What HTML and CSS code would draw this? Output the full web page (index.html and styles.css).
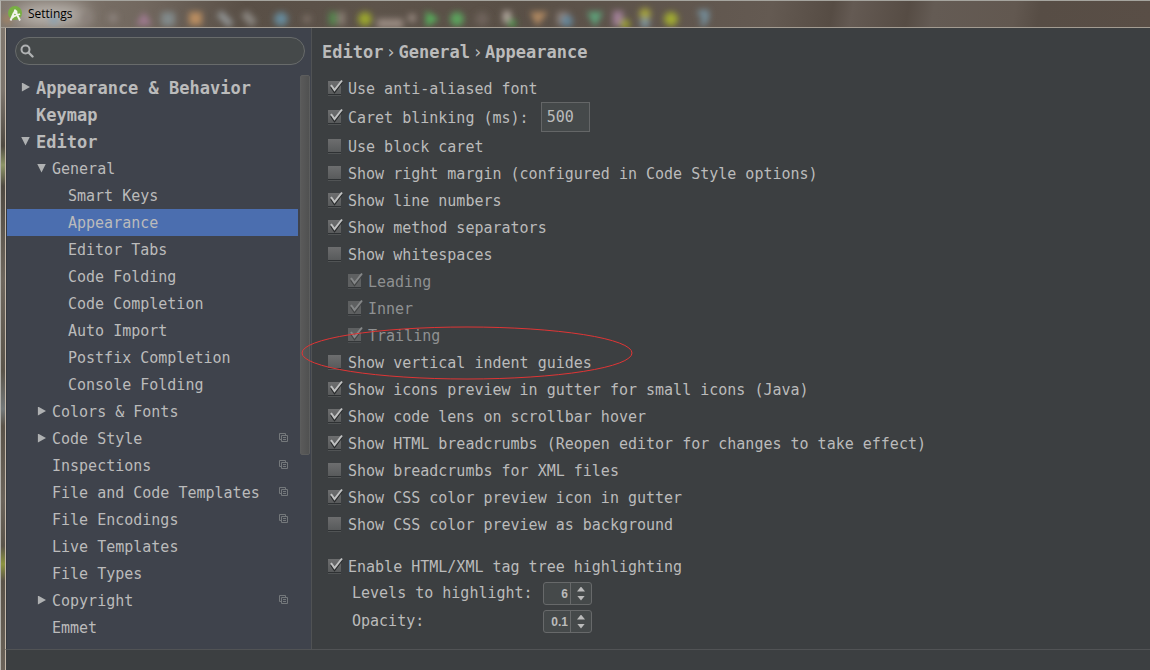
FILE: index.html
```html
<!DOCTYPE html>
<html lang="en">
<head>
<meta charset="utf-8">
<title>Settings</title>
<link rel="stylesheet" href="styles.css">
</head>
<body>
<div class="window">
  <header class="titlebar">
    <svg class="glass" width="720" height="26" viewBox="0 0 720 26" aria-hidden="true">
      <defs>
        <filter id="soft" x="-5%" y="-50%" width="110%" height="200%"><feGaussianBlur stdDeviation="3"/></filter>
        <filter id="glow" x="-50%" y="-100%" width="200%" height="300%"><feGaussianBlur stdDeviation="9"/></filter>
      </defs>
      <ellipse cx="50" cy="14" rx="38" ry="10" fill="#c8c3be" filter="url(#glow)"/>
      <g filter="url(#soft)">
        <circle cx="6" cy="18" r="4" fill="#a8845f"/>
        <circle cx="53" cy="19" r="5" fill="#8ba1b0"/>
        <circle cx="86" cy="17" r="5" fill="#8a807a"/>
        <circle cx="112" cy="17" r="5" fill="#8a807a"/>
        <path d="M135 24l8-13 8 13z" fill="#a07a92"/>
        <rect x="160" y="11" width="14" height="14" rx="3" fill="#81898a"/>
        <rect x="188" y="11" width="13" height="13" fill="#b98d60"/>
        <path d="M218 12l12 12" stroke="#929596" stroke-width="7"/>
        <path d="M243 12l10 11" stroke="#8b8782" stroke-width="8"/>
        <circle cx="280" cy="18" r="7" fill="#66899a"/>
        <circle cx="306" cy="18" r="4" fill="#7d7067"/>
        <rect x="328" y="11" width="8" height="13" fill="#558750"/>
        <rect x="337" y="11" width="7" height="13" fill="#897d73"/>
        <circle cx="364" cy="18" r="7" fill="#9aa52f"/>
        <rect x="376" y="18" width="26" height="9" fill="#9a8b82"/>
        <circle cx="411" cy="17" r="4" fill="#9a8b82"/>
        <path d="M425 10l13 8-13 8z" fill="#56b05b"/>
        <circle cx="456" cy="18" r="7" fill="#5ba35d"/>
        <circle cx="481" cy="18" r="7" fill="#6d625a"/>
        <rect x="502" y="10" width="8" height="12" fill="#b0a69d"/>
        <circle cx="511" cy="22" r="4" fill="#4f9b4f"/>
        <path d="M529 11h18l-11 14z" fill="#b28a62"/>
        <rect x="556" y="11" width="12" height="13" fill="#8c8079"/>
        <circle cx="566" cy="20" r="6" fill="#65869a"/>
        <path d="M586 11h16l-8 15z" fill="#5fa47c"/>
        <rect x="612" y="10" width="10" height="15" fill="#a17f98"/>
        <circle cx="624" cy="23" r="5" fill="#9ba02e"/>
        <circle cx="644" cy="13" r="6" fill="#a4a33e"/>
        <circle cx="644" cy="22" r="5" fill="#7f959e"/>
        <circle cx="670" cy="18" r="7" fill="#a0aa30"/>
        <path d="M697 12h8v5l-4 7" fill="none" stroke="#758f9c" stroke-width="6"/>
      </g>
    </svg>
    <svg class="app-icon" width="16" height="16" viewBox="0 0 16 16" aria-hidden="true">
      <circle cx="7" cy="7" r="7" fill="#78b043"/>
      <path d="M7 3.500v3M6 6.500L2.500 14.500M8 6.500l4 8M4 12c1.500-2.500 5-2.500 8-4" fill="none" stroke="#f2f5ee" stroke-width="1.900"/>
      <circle cx="7.500" cy="6" r="2" fill="#f2f5ee"/>
    </svg>
    <span class="title">Settings</span>
  </header>

  <div class="client">
    <aside class="sidebar">
      <div class="search">
        <svg width="14" height="14" viewBox="0 0 14 14" aria-hidden="true"><circle cx="5.500" cy="5.500" r="4" fill="none" stroke="#b0b2b3" stroke-width="2"/><path d="M8.500 8.500l4 4" stroke="#b0b2b3" stroke-width="2.400" stroke-linecap="round"/></svg>
        <input type="search" aria-label="Search settings">
      </div>
      <div class="tree-pane">
        <nav class="tree" aria-label="Settings sections">
          <button class="node top closed">Appearance &amp; Behavior</button>
          <button class="node top">Keymap</button>
          <button class="node top open">Editor</button>
          <button class="node group open">General</button>
          <button class="node leaf">Smart Keys</button>
          <button class="node leaf selected" aria-current="page">Appearance</button>
          <button class="node leaf">Editor Tabs</button>
          <button class="node leaf">Code Folding</button>
          <button class="node leaf">Code Completion</button>
          <button class="node leaf">Auto Import</button>
          <button class="node leaf">Postfix Completion</button>
          <button class="node leaf">Console Folding</button>
          <button class="node group closed">Colors &amp; Fonts</button>
          <button class="node group closed">Code Style<svg class="copy" width="10" height="10" viewBox="0 0 10 10"><path d="M2.500 6.500h-2v-6h6v2M2.500 2.500h6v6h-6zM4 4.500h3M4 6.500h3"/></svg></button>
          <button class="node group">Inspections<svg class="copy" width="10" height="10" viewBox="0 0 10 10"><path d="M2.500 6.500h-2v-6h6v2M2.500 2.500h6v6h-6zM4 4.500h3M4 6.500h3"/></svg></button>
          <button class="node group">File and Code Templates<svg class="copy" width="10" height="10" viewBox="0 0 10 10"><path d="M2.500 6.500h-2v-6h6v2M2.500 2.500h6v6h-6zM4 4.500h3M4 6.500h3"/></svg></button>
          <button class="node group">File Encodings<svg class="copy" width="10" height="10" viewBox="0 0 10 10"><path d="M2.500 6.500h-2v-6h6v2M2.500 2.500h6v6h-6zM4 4.500h3M4 6.500h3"/></svg></button>
          <button class="node group">Live Templates</button>
          <button class="node group">File Types</button>
          <button class="node group closed">Copyright<svg class="copy" width="10" height="10" viewBox="0 0 10 10"><path d="M2.500 6.500h-2v-6h6v2M2.500 2.500h6v6h-6zM4 4.500h3M4 6.500h3"/></svg></button>
          <button class="node group">Emmet</button>
        </nav>
        <div class="scrollbar"><div class="thumb"></div></div>
      </div>
    </aside>

    <main class="content">
      <h1 class="crumbs"><span>Editor</span><span class="sep">›</span><span>General</span><span class="sep">›</span><span>Appearance</span></h1>
      <form class="options">
        <label class="option"><input type="checkbox" checked>Use anti-aliased font</label>
        <div class="option caret">
          <input type="checkbox" id="blink" checked><label for="blink">Caret blinking (ms):</label>
          <input class="field" type="text" value="500" aria-label="Caret blinking period">
        </div>
        <label class="option"><input type="checkbox">Use block caret</label>
        <label class="option"><input type="checkbox">Show right margin (configured in Code Style options)</label>
        <label class="option"><input type="checkbox" checked>Show line numbers</label>
        <label class="option"><input type="checkbox" checked>Show method separators</label>
        <label class="option"><input type="checkbox">Show whitespaces</label>
        <label class="option nested"><input type="checkbox" checked disabled>Leading</label>
        <label class="option nested"><input type="checkbox" checked disabled>Inner</label>
        <label class="option nested"><input type="checkbox" checked disabled>Trailing</label>
        <label class="option marked"><input type="checkbox">Show vertical indent guides
          <svg class="ring" width="332" height="54" viewBox="0 0 332 54" aria-hidden="true"><ellipse cx="166" cy="27" rx="165" ry="26" fill="none" stroke="#e03535"/></svg>
        </label>
        <label class="option"><input type="checkbox" checked>Show icons preview in gutter for small icons (Java)</label>
        <label class="option"><input type="checkbox" checked>Show code lens on scrollbar hover</label>
        <label class="option"><input type="checkbox" checked>Show HTML breadcrumbs (Reopen editor for changes to take effect)</label>
        <label class="option"><input type="checkbox">Show breadcrumbs for XML files</label>
        <label class="option"><input type="checkbox" checked>Show CSS color preview icon in gutter</label>
        <label class="option"><input type="checkbox">Show CSS color preview as background</label>
        <label class="option section"><input type="checkbox" checked>Enable HTML/XML tag tree highlighting</label>
        <div class="numbers">
          <label for="levels">Levels to highlight:</label>
          <div class="spinner"><input id="levels" type="text" inputmode="numeric" value="6"><div class="steps"><button type="button" class="up" aria-label="More levels"></button><button type="button" class="down" aria-label="Fewer levels"></button></div></div>
          <label for="opacity">Opacity:</label>
          <div class="spinner"><input id="opacity" type="text" inputmode="decimal" value="0.1"><div class="steps"><button type="button" class="up" aria-label="More opacity"></button><button type="button" class="down" aria-label="Less opacity"></button></div></div>
        </div>
      </form>
    </main>
  </div>
  <footer class="footer"></footer>
</div>
</body>
</html>
```

FILE: styles.css
```css
* { box-sizing: border-box; }

body {
  margin: 0;
  background: #3c3f41;
  color: #bbbbbb;
  font: 15px/27px "DejaVu Sans Mono", monospace;
}

button, input { font: inherit; color: inherit; margin: 0; }

.window {
  display: grid;
  grid-template-rows: 27px 1fr 21px;
  min-height: 100vh;
  padding-left: 5px;
  border-top: 1px solid #a5a49e;
  border-left: 1px solid #b4b2ac;
  background: linear-gradient(180deg, #82796f 0, #7c756d 90px, #4f4a42 145px, #8d9567 164px, #4f4a42 185px, #6e675e 280px, #5a544a 370px, #74797a 408px, #5a5349 425px, #6b645b 500px, #5a544a 545px, #8c9440 563px, #5a5349 580px, #6b635a 670px);
}

.titlebar {
  position: relative;
  display: flex;
  align-items: center;
  gap: 4px;
  margin-left: -5px;
  padding-left: 7px;
  border-bottom: 1px solid #a39c92;
  background: linear-gradient(100deg, #81786f 0, #72685f 140px, #594f46 240px, #5d534a 370px, #594f46 500px, #645a52 760px, #564c44 820px, #645a53 840px, #564c44 895px, #645b54 920px, #625850 1000px, #574d45 1025px, #594e46 100%);
}

.glass { position: absolute; left: 0; top: 0; }
.app-icon, .title { position: relative; }
.title {
  color: #000000;
  font: 12px/18px "Open Sans", sans-serif;
}

.client {
  display: grid;
  grid-template-columns: 306px 1fr;
  border-left: 1px solid #c4b8aa;
  margin-left: -1px;
}

.sidebar {
  display: flex;
  flex-direction: column;
  border-right: 1px solid #505254;
  border-left: 1px solid #363a40;
  background: #3f434c;
}

.search {
  display: flex;
  align-items: center;
  gap: 6px;
  height: 28px;
  margin: 9px 6px 9px 8px;
  padding: 0 10px 0 4px;
  border: 1px solid #686b6b;
  border-radius: 14px;
  background: #45494a;
}
.search input {
  flex: 1;
  min-width: 0;
  border: 0;
  outline: 0;
  background: transparent;
}

.tree-pane { display: flex; flex: 1; }
.tree { display: flex; flex: 1; flex-direction: column; }

.node {
  display: flex;
  align-items: center;
  height: 27px;
  padding: 2px 9px 0 0;
  border: 0;
  background: transparent;
  text-align: left;
  white-space: nowrap;
}
.node::before {
  content: "";
  flex: none;
  width: 9px;
  height: 9px;
  margin: 0 6px 3px 0;
}
.top { padding-left: 14px; font-size: 17px; font-weight: bold; }
.group { padding-left: 30px; }
.leaf { padding-left: 46px; }
.open::before { background: #afb1b2; clip-path: polygon(0 0, 100% 0, 50% 100%); }
.closed::before { background: #afb1b2; clip-path: polygon(10% 0, 100% 50%, 10% 100%); }
.selected { background: #4b6eaf; }
.copy { margin: 0 0 3px auto; fill: none; stroke: #74787b; }

.scrollbar { width: 13px; padding: 1px 1px 0 2px; }
.thumb {
  height: 380px;
  border: 1px solid #5c5d5d;
  border-radius: 2px;
  background: linear-gradient(90deg, #5a5a5a, #505151);
}

.content { padding: 11px 16px 0 10px; background: #3c3f41; }

.crumbs {
  display: flex;
  margin: 0 0 9px;
  font-size: 17px;
  line-height: 27px;
}
.sep { width: 15px; text-align: center; font-weight: normal; }

.options { padding-left: 5px; }
.option {
  display: flex;
  align-items: center;
  height: 27px;
  padding-top: 2px;
  white-space: nowrap;
}
.option input[type="checkbox"] {
  appearance: none;
  flex: none;
  width: 16px;
  height: 18px;
  margin: 0 5px 4px 0;
  background: url("data:image/svg+xml,%3Csvg xmlns='http://www.w3.org/2000/svg' width='16' height='18'%3E%3Cdefs%3E%3ClinearGradient id='g' x2='0' y2='1'%3E%3Cstop stop-color='%236d6e6f'/%3E%3Cstop offset='1' stop-color='%23585a5b'/%3E%3C/linearGradient%3E%3C/defs%3E%3Cpath d='M1 15.500h13' stroke='%232e3133'/%3E%3Cpath d='M1 16.500h13' stroke='%23515455'/%3E%3Crect x='1' y='2' width='13' height='13' fill='url(%23g)'/%3E%3C/svg%3E");
}
.option input[type="checkbox"]:checked {
  background: url("data:image/svg+xml,%3Csvg xmlns='http://www.w3.org/2000/svg' width='16' height='18'%3E%3Cdefs%3E%3ClinearGradient id='g' x2='0' y2='1'%3E%3Cstop stop-color='%236d6e6f'/%3E%3Cstop offset='1' stop-color='%23585a5b'/%3E%3C/linearGradient%3E%3C/defs%3E%3Cpath d='M1 15.500h13' stroke='%232e3133'/%3E%3Cpath d='M1 16.500h13' stroke='%23515455'/%3E%3Crect x='1' y='2' width='13' height='13' fill='url(%23g)'/%3E%3Cpath d='M4 8l3.500 5L15 3' fill='none' stroke='%23282a2b' stroke-width='2'/%3E%3Cpath d='M4 6l3.500 5L15 1.500' fill='none' stroke='%23c0c1c1' stroke-width='2'/%3E%3C/svg%3E");
}
.option input[type="checkbox"]:disabled {
  background: url("data:image/svg+xml,%3Csvg xmlns='http://www.w3.org/2000/svg' width='16' height='18'%3E%3Cpath d='M1 15.500h13' stroke='%23333638'/%3E%3Cpath d='M1 16.500h13' stroke='%234b4e50'/%3E%3Crect x='1' y='2' width='13' height='13' fill='%235e6061'/%3E%3Cpath d='M4 8l3.500 5L15 3' fill='none' stroke='%23424445' stroke-width='2'/%3E%3Cpath d='M4 6l3.500 5L15 1.500' fill='none' stroke='%23858788' stroke-width='2'/%3E%3C/svg%3E");
}

.caret { height: 31px; }
.field {
  width: 49px;
  height: 30px;
  margin: 0 0 3px 12px;
  padding: 0 5px;
  border: 1px solid #646667;
  background: #45494a;
}
.nested { padding-left: 20px; color: #8f9192; }
.marked { position: relative; }
.ring { position: absolute; left: -26px; top: -23px; pointer-events: none; }
.section { margin-top: 15px; }

.numbers {
  display: grid;
  grid-template-columns: 191px 49px;
  align-items: center;
  row-gap: 1px;
  padding-left: 25px;
}
.spinner {
  display: flex;
  width: 49px;
  height: 23px;
  border: 1px solid #67696a;
  border-radius: 3px;
  background: #45494a;
}
.spinner input {
  width: 27px;
  padding: 0 2px 0 0;
  border: 0;
  border-right: 1px solid #67696a;
  background: transparent;
  font: bold 12px/20px "Liberation Sans", sans-serif;
  text-align: right;
}
.steps {
  display: flex;
  flex: 1;
  flex-direction: column;
  align-items: center;
  justify-content: center;
  gap: 4px;
}
.steps button {
  width: 8px;
  height: 5px;
  padding: 0;
  border: 0;
  background: #bbbbbb;
}
.up { clip-path: polygon(50% 0, 100% 100%, 0 100%); }
.down { clip-path: polygon(0 0, 100% 0, 50% 100%); }

.footer {
  margin-left: -1px;
  border-left: 1px solid #c4b8aa;
  border-top: 1px solid #515355;
  background: #3c3f41;
}
```
